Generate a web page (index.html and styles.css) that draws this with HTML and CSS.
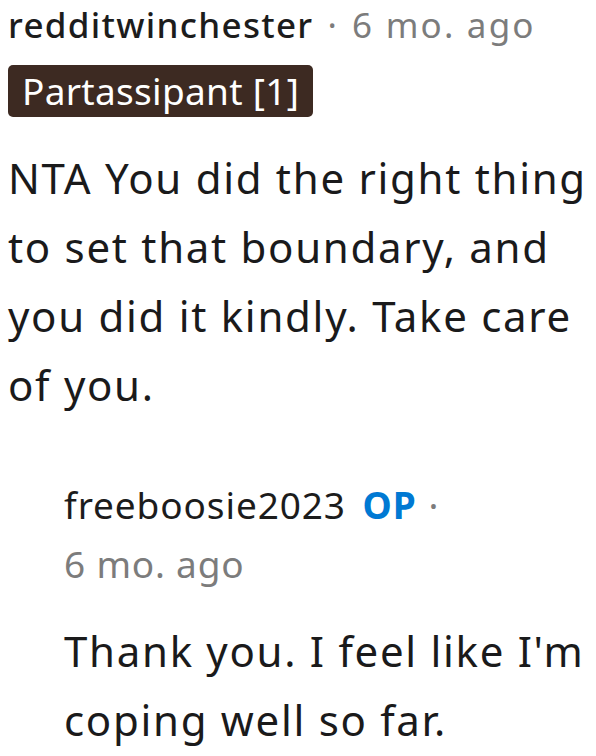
FILE: index.html
```html
<!DOCTYPE html>
<html>
<head>
<meta charset="utf-8">
<link rel="stylesheet" href="styles.css">
</head>
<body>
<div class="comment">
  <div class="meta">
    <span class="author">redditwinchester</span><span class="dot">·</span><span class="time">6 mo. ago</span>
  </div>
  <div class="flair-row"><span class="flair">Partassipant [1]</span></div>
  <p class="body">NTA You did the right thing to set that boundary, and you did it kindly. Take care of you.</p>
  <div class="reply">
    <div class="meta reply-meta">
      <span class="author">freeboosie2023</span> <span class="op">OP</span><span class="dot">·</span> <span class="time">6 mo. ago</span>
    </div>
    <p class="body reply-body">Thank you. I feel like I'm coping well so far.</p>
  </div>
</div>
</body>
</html>
```

FILE: styles.css
```css
html, body {
  margin: 0;
  padding: 0;
  background: #ffffff;
}

.comment {
  padding: 0 0 0 8px;
  width: 590px;
  box-sizing: border-box;
}

.meta {
  font-family: "Noto Sans", "Open Sans", sans-serif;
  font-size: 35px;
  line-height: 48px;
  letter-spacing: 1.3px;
  color: #1c1c1c;
  padding-top: 1px;
}

.author {
  font-weight: 500;
  color: #1c1c1c;
}

.dot {
  color: #7c7c7c;
  margin: 0 14px;
}

.time {
  color: #7c7c7c;
  white-space: nowrap;
  letter-spacing: 2.2px;
}

.flair-row {
  margin-top: 16px;
  display: flex;
}

.flair {
  background: #3d2a22;
  color: #ffffff;
  font-family: "Noto Sans", "Open Sans", sans-serif;
  font-size: 37px;
  line-height: 52px;
  height: 52px;
  letter-spacing: 0.3px;
  padding: 0 14px;
  border-radius: 5px;
}

.body {
  font-family: "Noto Sans", "Open Sans", sans-serif;
  font-size: 42px;
  line-height: 69px;
  letter-spacing: 1.7px;
  color: #1a1a1b;
  margin: 26px 0 0 0;
}

.reply {
  margin-left: 56px;
  margin-top: 56px;
}

.reply-meta {
  font-size: 37px;
  line-height: 59px;
  letter-spacing: 0.9px;
  padding-top: 0;
}

.reply-meta .author {
  font-weight: 400;
}

.reply-meta .time {
  letter-spacing: 0.8px;
}

.reply-meta .op {
  margin-left: 6px;
}

.reply-meta .dot {
  margin: 0 0 0 12px;
}

.op {
  color: #0079d3;
  font-weight: 700;
}

.reply-body {
  margin-top: 23px;
}
```
